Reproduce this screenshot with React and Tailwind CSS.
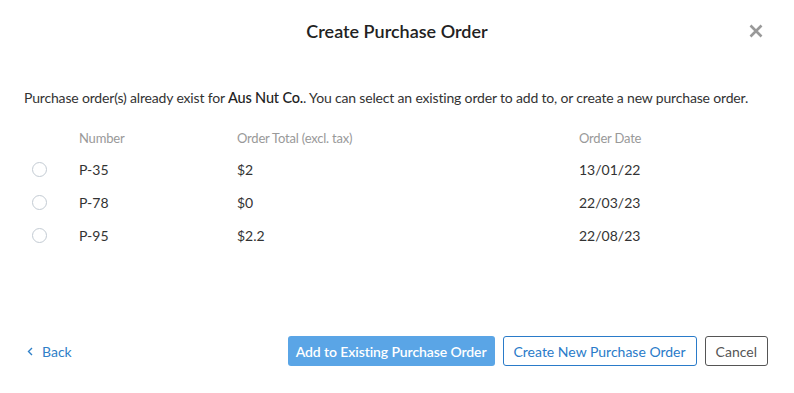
import React, { useState } from "react";

const orders = [
  { number: "P-35", total: "$2", date: "13/01/22" },
  { number: "P-78", total: "$0", date: "22/03/23" },
  { number: "P-95", total: "$2.2", date: "22/08/23" },
];

const App = () => {
  const [selected, setSelected] = useState(null);

  return (
    <div
      className="w-[794px] h-[393px] bg-white text-[#333] flex flex-col"
      style={{ fontFamily: "Lato, 'Open Sans', sans-serif" }}
    >
      {/* header */}
      <div className="relative h-[62px] flex items-center justify-center">
        <h1 className="text-[18px] font-semibold text-[#222]">Create Purchase Order</h1>
        <button className="absolute right-[31px] top-[24px] text-[#999]">
          <svg width="14" height="14" viewBox="0 0 14 14">
            <path d="M1.5 1.5 L12.5 12.5 M12.5 1.5 L1.5 12.5" stroke="currentColor" strokeWidth="2.6" strokeLinecap="butt" />
          </svg>
        </button>
      </div>

      <p className="px-6 mt-[26px] text-[14px] leading-5 text-[#333] whitespace-nowrap tracking-[-0.17px]">
        Purchase order(s) already exist for{" "}
        <span className="text-[14.5px] font-medium text-[#222]">Aus Nut Co.</span>. You can select an
        existing order to add to, or create a new purchase order.
      </p>

      {/* table */}
      <div className="px-6 mt-[21px]">
        <div className="grid grid-cols-[55px_158px_342px_1fr] h-[20px] items-center text-[13px] text-[#999] tracking-[-0.2px]">
          <div />
          <div>Number</div>
          <div>Order Total (excl. tax)</div>
          <div>Order Date</div>
        </div>
        <div className="mt-[4px]">
          {orders.map((o, i) => (
            <div
              key={o.number}
              className="grid grid-cols-[55px_158px_342px_1fr] h-[33px] items-center text-[14px] text-[#333] cursor-pointer"
              onClick={() => setSelected(i)}
            >
              <div className="pl-2">
                <span className="block w-[15px] h-[15px] rounded-full border-[1.5px] border-[#c3cbd3] bg-white">
                  {selected === i && <span className="block m-[2.5px] w-[7px] h-[7px] rounded-full bg-[#5aa5e6]" />}
                </span>
              </div>
              <div>{o.number}</div>
              <div>{o.total}</div>
              <div>{o.date}</div>
            </div>
          ))}
        </div>
      </div>

      {/* footer */}
      <div className="mt-auto mb-[27px] pl-[27px] pr-[26px] flex items-center">
        <button className="flex items-center gap-[9px] text-[14px] text-[#2f80c8]">
          <svg width="6" height="9" viewBox="0 0 6 9">
            <path d="M5 1 L1.5 4.5 L5 8" fill="none" stroke="currentColor" strokeWidth="1.4" />
          </svg>
          Back
        </button>
        <div className="ml-auto flex items-center gap-2">
          <button className="h-[30px] px-[8px] rounded-[3px] bg-[#5aa5e6] text-white text-[14px] font-semibold tracking-[-0.1px]">
            Add to Existing Purchase Order
          </button>
          <button className="h-[30px] px-[10px] rounded-[3px] border border-[#2a7bc9] text-[#2a7bc9] text-[14px]">
            Create New Purchase Order
          </button>
          <button className="h-[30px] px-[10px] rounded-[3px] border border-[#555] text-[#555] text-[14px]">
            Cancel
          </button>
        </div>
      </div>
    </div>
  );
};

export default App;
